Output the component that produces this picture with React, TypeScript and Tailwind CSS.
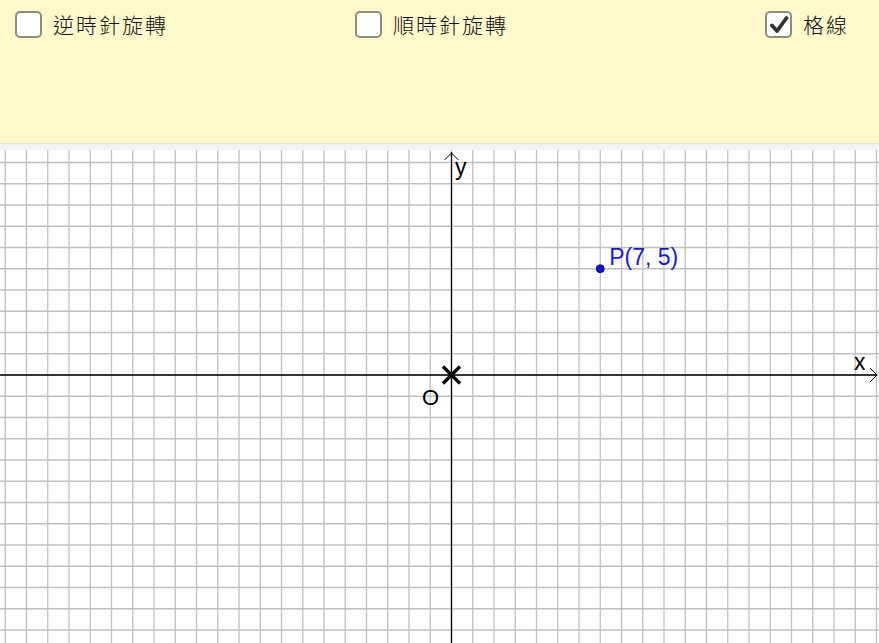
import React from "react";

const UNIT = 21.25;
const OX = 451.5;
const OY = 225;
const W = 879;
const H = 493;

function Checkbox({ checked }: { checked?: boolean }) {
  return (
    <div className="w-[27px] h-[27px] rounded-[5px] border-2 border-[#8e8d7c] bg-white flex items-center justify-center shrink-0">
      {checked && (
        <svg width="20" height="20" viewBox="0 0 20 20">
          <path d="M3 10.5 L8 16 L17.5 3" fill="none" stroke="#333" strokeWidth="3.8" strokeLinecap="round" strokeLinejoin="round" />
        </svg>
      )}
    </div>
  );
}

function Option({ label, checked, className }: { label: string; checked?: boolean; className?: string }) {
  return (
    <div className={`flex items-center gap-[11px] ${className ?? ""}`}>
      <Checkbox checked={checked} />
      <span className="text-[21px] leading-none tracking-[2px] font-light text-[#111] [font-family:'Noto_Sans_CJK_TC','Noto_Sans_CJK_SC',sans-serif]">
        {label}
      </span>
    </div>
  );
}

function Graph() {
  const vLines: number[] = [];
  for (let k = -22; k <= 22; k++) {
    const x = OX + k * UNIT;
    if (x >= 0 && x <= W) vLines.push(x);
  }
  const hLines: number[] = [];
  for (let k = -12; k <= 14; k++) {
    const y = OY + k * UNIT;
    if (y >= 0 && y <= H) hLines.push(y);
  }
  const px = OX + 7 * UNIT;
  const py = OY - 5 * UNIT;
  const font = "'Liberation Sans', Arial, sans-serif";

  return (
    <svg width={W} height={H} viewBox={`0 0 ${W} ${H}`} className="block">
      <rect width={W} height={H} fill="#fff" />
      {vLines.map((x) => (
        <line key={`v${x}`} x1={x} y1={0} x2={x} y2={H} stroke="#c0c0c0" strokeWidth="1.3" />
      ))}
      {hLines.map((y) => (
        <line key={`h${y}`} x1={0} y1={y} x2={W} y2={y} stroke="#c0c0c0" strokeWidth="1.3" />
      ))}
      {/* axes */}
      <line x1={0} y1={OY} x2={877} y2={OY} stroke="#000" strokeWidth="1.3" />
      <line x1={OX} y1={2} x2={OX} y2={H} stroke="#000" strokeWidth="1.3" />
      <path d={`M870 ${OY - 7} L877 ${OY} L870 ${OY + 7}`} fill="none" stroke="#000" strokeWidth="1" />
      <path d={`M${OX - 7} 10 L${OX} 3 L${OX + 7} 10`} fill="none" stroke="#000" strokeWidth="1" />
      <text x={854} y={OY - 5} fontSize="23" fontFamily={font} fill="#000">x</text>
      <text x={455} y={25} fontSize="23" fontFamily={font} fill="#000">y</text>
      <text x={422} y={255} fontSize="22" fontFamily={font} fill="#000">O</text>
      {/* origin cross */}
      <path d={`M${OX - 8.5} ${OY - 8.5} L${OX + 8.5} ${OY + 8.5} M${OX + 8.5} ${OY - 8.5} L${OX - 8.5} ${OY + 8.5}`} stroke="#000" strokeWidth="3.2" />
      {/* point P */}
      <circle cx={px} cy={py} r="4" fill="#1414c8" stroke="#000080" strokeWidth="0.8" />
      <text x={px + 9} y={py - 4} fontSize="23" fontFamily={font} fill="#1a1ad6">P(7, 5)</text>
    </svg>
  );
}

export default function App() {
  return (
    <div className="w-[879px] h-[643px] overflow-hidden flex flex-col bg-white">
      {/* Control panel */}
      <div className="h-[143px] bg-[#fff9cc] flex items-start pt-[11px] pl-[15px] shrink-0">
        <Option label="逆時針旋轉" className="w-[340px]" />
        <Option label="順時針旋轉" className="w-[410px]" />
        <Option label="格線" checked />
      </div>
      <div className="h-[7px] bg-[#f3f3f3] border-t border-[#e4e4e4] shrink-0" />
      {/* Graphics view */}
      <Graph />
    </div>
  );
}
